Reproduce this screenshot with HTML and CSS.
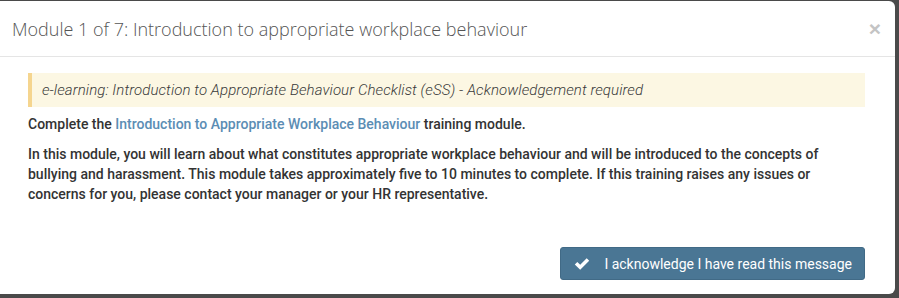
FILE: index.html
```html
<!DOCTYPE html>
<html lang="en">
<head>
  <meta charset="UTF-8" />
  <title>Module 1 of 7</title>
  <link rel="stylesheet" href="styles.css">
</head>
<body>
  <div class="modal">
    <div class="modal-header">
      <h4 class="modal-title">Module 1 of 7: Introduction to appropriate workplace behaviour</h4>
      <button class="close" aria-label="Close">&times;</button>
    </div>
    <div class="modal-body">
      <div class="alert">e-learning: Introduction to Appropriate Behaviour Checklist (eSS) - Acknowledgement required</div>
      <p>Complete the <a href="#">Introduction to Appropriate Workplace Behaviour</a> training module.</p>
      <p>In this module, you will learn about what constitutes appropriate workplace behaviour and will be introduced to the concepts of bullying and harassment. This module takes approximately five to 10 minutes to complete. If this training raises any issues or concerns for you, please contact your manager or your HR representative.</p>
    </div>
    <div class="modal-footer">
      <button class="ack-button">
        <svg class="check" viewBox="0 0 16 16" width="16" height="16"><path d="M0.8 8.4 L3.3 5.9 L6.2 8.8 L12.7 2.3 L15.2 4.8 L6.2 13.8 Z" fill="#fff"/></svg>
        <span>I acknowledge I have read this message</span>
      </button>
    </div>
  </div>
</body>
</html>
```

FILE: styles.css
```css
* {
  margin: 0;
  padding: 0;
  box-sizing: border-box;
}
html, body {
  height: 100%;
  background-color: #4a4a4a;
  font-family: Roboto, "Liberation Sans", sans-serif;
  font-size: 14px;
  color: #333;
}
.modal {
  margin: 1px 0 0 -6px;
  width: 901px;
  height: 293px;
  background-color: #fff;
  border-radius: 6px;
  display: flex;
  flex-direction: column;
}
.modal-header {
  display: flex;
  align-items: center;
  justify-content: space-between;
  height: 56px;
  padding: 0 14px 0 18px;
  border-bottom: 1px solid #e5e5e5;
}
.modal-title {
  font-family: "Open Sans", sans-serif;
  font-weight: 300;
  font-size: 18px;
  color: #555;
}
.close {
  background: none;
  border: none;
  font-family: "Liberation Sans", sans-serif;
  font-size: 21px;
  font-weight: 700;
  color: #c4c4c4;
  cursor: pointer;
  line-height: 1;
}
.modal-body {
  padding: 16px 30px 0 34px;
}
.alert {
  background-color: #fcf7e3;
  border-left: 4px solid #f5d58f;
  padding: 0 14px 0 10px;
  height: 34px;
  display: flex;
  align-items: center;
  font-size: 15px;
  font-style: italic;
  font-weight: 300;
  letter-spacing: 0.09px;
  color: #3a3a3a;
  margin-bottom: 7px;
}
.modal-body p {
  font-weight: 500;
  line-height: 20px;
  margin-bottom: 10px;
}
.modal-body a {
  color: #5b8db4;
  text-decoration: none;
}
.modal-footer {
  margin-top: auto;
  display: flex;
  justify-content: flex-end;
  padding: 0 30px 14px 0;
}
.ack-button {
  display: flex;
  align-items: center;
  gap: 14px;
  height: 33px;
  padding: 0 12px 0 13px;
  white-space: nowrap;
  background-color: #4a7694;
  border: 1px solid #416a86;
  border-radius: 3px;
  color: #fff;
  font-family: Roboto, "Liberation Sans", sans-serif;
  font-size: 14px;
  font-weight: 400;
  cursor: pointer;
}
```
